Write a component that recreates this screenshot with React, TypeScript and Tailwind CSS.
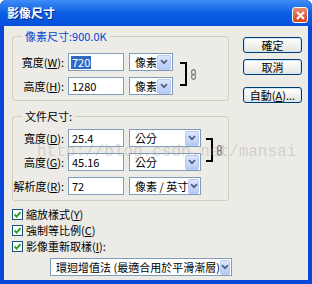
import React from "react";

const font = { fontFamily: '"Noto Sans CJK TC", "Noto Sans", sans-serif' };

function Arrow() {
  return (
    <div className="flex items-center justify-center w-[14px] h-[15px] rounded-[2px] bg-gradient-to-b from-[#dce6fc] to-[#b6caf4] border border-[#b8c9ef]">
      <svg width="8" height="6" viewBox="0 0 8 6">
        <path d="M1 1.2 L4 4.2 L7 1.2" stroke="#4d6185" strokeWidth="1.8" fill="none" />
      </svg>
    </div>
  );
}

function Select({ w, text }: { w: string; text: string }) {
  return (
    <div className={`${w} h-[18px] bg-white border border-[#7f9db9] flex items-center justify-between pl-[5px] pr-[1px]`}>
      <span className="text-[11px] leading-none text-black whitespace-nowrap">{text}</span>
      <Arrow />
    </div>
  );
}

function Input({ value, selected }: { value: string; selected?: boolean }) {
  return (
    <div className="w-[56px] h-[18px] bg-white border border-[#7f9db9] flex items-center pl-[2px]">
      {selected ? (
        <span className="bg-[#316ac5] text-white text-[11px] leading-[13px] px-[1px]">{value}</span>
      ) : (
        <span className="text-black text-[11px] leading-[13px] px-[1px]">{value}</span>
      )}
    </div>
  );
}

function Row({ label, u, value, selected, selW, selText }: { label: string; u: string; value: string; selected?: boolean; selW: string; selText: string }) {
  return (
    <div className="flex items-center h-[18px]">
      <div className="w-[51px] text-right text-[11px] leading-none text-black whitespace-nowrap">
        {label}(<span className="underline">{u}</span>):
      </div>
      <div className="ml-[4px]">
        <Input value={value} selected={selected} />
      </div>
      <div className="ml-[5px]">
        <Select w={selW} text={selText} />
      </div>
    </div>
  );
}

function Chain() {
  return (
    <svg width="5" height="11" viewBox="0 0 5 11">
      <rect x="0.7" y="0.7" width="3.6" height="5" rx="1.8" stroke="#777" strokeWidth="1.2" fill="none" />
      <rect x="0.7" y="5.3" width="3.6" height="5" rx="1.8" stroke="#777" strokeWidth="1.2" fill="none" />
    </svg>
  );
}

function Bracket() {
  return <div className="w-[7px] self-stretch my-[9px] border-t-2 border-r-2 border-b-2 border-black" />;
}

function Check({ children }: { children: React.ReactNode }) {
  return (
    <div className="flex items-center h-[16px]">
      <div className="w-[11px] h-[11px] bg-white border border-[#1c5180] flex items-center justify-center">
        <svg width="9" height="9" viewBox="0 0 9 9">
          <path d="M1.5 4.5 L3.6 6.6 L7.6 2.2" stroke="#21a121" strokeWidth="1.8" fill="none" />
        </svg>
      </div>
      <span className="ml-[3px] text-[11px] leading-none text-black whitespace-nowrap">{children}</span>
    </div>
  );
}

function Btn({ children }: { children: React.ReactNode }) {
  return (
    <div className="w-[59px] h-[16px] rounded-[3px] border border-[#003c74] bg-gradient-to-b from-white to-[#e6e5dc] shadow-[inset_0_0_0_1px_#cee7ff] flex items-center justify-center text-[11px] leading-none text-black">
      {children}
    </div>
  );
}

export default function App() {
  return (
    <div className="w-[312px] h-[284px] relative overflow-hidden bg-[#0846d8] rounded-t-[6px] flex flex-col" style={font}>
      {/* title bar */}
      <div className="h-[26px] flex items-center justify-between pl-[7px] pr-[4px] bg-gradient-to-b from-[#3d8cf6] via-[#0b5ee4] to-[#0650dc] rounded-t-[6px]">
        <span className="text-white font-bold text-[12px] leading-none [text-shadow:1px_1px_0_#0a2a80]">影像尺寸</span>
        <div className="w-[16px] h-[16px] mt-[4px] rounded-[3px] border border-white bg-gradient-to-b from-[#e88a6a] to-[#d5421c] flex items-center justify-center">
          <svg width="9" height="9" viewBox="0 0 9 9">
            <path d="M1 1 L8 8 M8 1 L1 8" stroke="white" strokeWidth="2" />
          </svg>
        </div>
      </div>
      {/* body */}
      <div className="flex-1 mx-[4px] mb-[4px] bg-[#ecebe6] flex flex-col">
        <div className="flex">
          <div className="ml-[8px] w-[217px] flex flex-col">
            <fieldset className="mt-[3px] border border-[#d0d0bf] rounded-[3px] px-0 pt-[10px] pb-[5px]">
              <legend className="ml-[9px] px-[3px] text-[11px] leading-[14px] text-[#0046d5]">像素尺寸:900.0K</legend>
              <div className="flex">
                <div className="flex flex-col gap-[6px]">
                  <Row label="寬度" u="W" value="720" selected selW="w-[44px]" selText="像素" />
                  <Row label="高度" u="H" value="1280" selW="w-[44px]" selText="像素" />
                </div>
                <div className="ml-[7px] flex">
                  <Bracket />
                </div>
                <div className="ml-[4px] flex items-center">
                  <Chain />
                </div>
              </div>
            </fieldset>
            <fieldset className="mt-[8px] border border-[#d0d0bf] rounded-[3px] px-0 pt-[6px] pb-[5px]">
              <legend className="ml-[9px] px-[3px] text-[11px] leading-[14px] text-black">文件尺寸:</legend>
              <div className="flex flex-col gap-[6px]">
                <div className="flex">
                  <div className="flex flex-col gap-[6px]">
                    <Row label="寬度" u="D" value="25.4" selW="w-[72px]" selText="公分" />
                    <Row label="高度" u="G" value="45.16" selW="w-[72px]" selText="公分" />
                  </div>
                  <div className="ml-[5px] flex">
                    <Bracket />
                  </div>
                  <div className="ml-[4px] flex items-center">
                    <Chain />
                  </div>
                </div>
                <Row label="解析度" u="R" value="72" selW="w-[72px]" selText="像素 / 英寸" />
              </div>
            </fieldset>
          </div>
          <div className="ml-[14px] mt-[11px] flex flex-col">
            <Btn>確定</Btn>
            <div className="mt-[6px]"><Btn>取消</Btn></div>
            <div className="mt-[12px]"><Btn>自動(<span className="underline">A</span>)...</Btn></div>
          </div>
        </div>
        <div className="ml-[8px] mt-[5px] flex flex-col">
          <Check>縮放樣式(<span className="underline">Y</span>)</Check>
          <Check>強制等比例(<span className="underline">C</span>)</Check>
          <Check>影像重新取樣(<span className="underline">I</span>):</Check>
        </div>
        <div className="ml-[46px] mt-[4px]">
          <Select w="w-[182px]" text="環迴增值法 (最適合用於平滑漸層)" />
        </div>
      </div>
      {/* watermark */}
      <div className="absolute left-[37px] top-[144px] text-[16px] leading-[16px] text-[rgba(140,140,140,0.3)] whitespace-nowrap pointer-events-none" style={{ fontFamily: '"Liberation Mono", monospace' }}>
        http://blog.csdn.net/mansai
      </div>
    </div>
  );
}
